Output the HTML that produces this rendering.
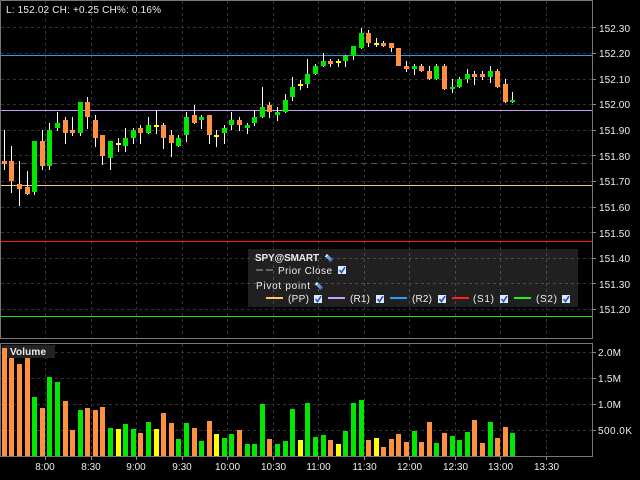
<!DOCTYPE html>
<html><head><meta charset="utf-8"><style>
html,body{margin:0;padding:0;background:#000;width:640px;height:480px;overflow:hidden}
svg{display:block;position:absolute;left:0;top:0}
text{font-family:"Liberation Sans",sans-serif;font-size:10px;fill:#eee}
</style></head><body>
<svg width="640" height="480" viewBox="0 0 640 480" shape-rendering="crispEdges">
<defs>
<g id="cb"><rect x="0" y="0" width="8" height="8" fill="#e4e9f6"/><path d="M1.5 4L3.5 6.5L7 1.2" fill="none" stroke="#1c5fd0" stroke-width="1.7" shape-rendering="geometricPrecision"/></g>
<g id="wr" shape-rendering="geometricPrecision"><path d="M1.5 1.5L6.5 6.5" stroke="#6f9fd8" stroke-width="3.2" fill="none"/><path d="M0.5 3L2.5 0.5" stroke="#f0f4fb" stroke-width="1.6" fill="none"/><path d="M4.5 7.5L7.5 5" stroke="#3f74b8" stroke-width="1.8" fill="none"/></g>
</defs>
<rect width="640" height="480" fill="#000"/>
<!-- grid -->
<path d="M1 27.5H592M1 53.5H592M1 79.5H592M1 104.5H592M1 130.5H592M1 155.5H592M1 181.5H592M1 207.5H592M1 232.5H592M1 258.5H592M1 283.5H592M1 309.5H592M1 352.5H592M1 378.5H592M1 404.5H592M1 430.5H592" stroke="#333" stroke-dasharray="3 3" fill="none"/>
<path d="M45.5 1V338M91.5 1V338M136.5 1V338M182.5 1V338M227.5 1V338M273.5 1V338M318.5 1V338M364.5 1V338M409.5 1V338M455.5 1V338M500.5 1V338M546.5 1V338M45.5 344V456M91.5 344V456M136.5 344V456M182.5 344V456M227.5 344V456M273.5 344V456M318.5 344V456M364.5 344V456M409.5 344V456M455.5 344V456M500.5 344V456M546.5 344V456" stroke="#333" stroke-dasharray="3 3" fill="none"/>
<!-- pivot lines -->
<path d="M1 55.5H592" stroke="#3399f0"/>
<path d="M1 110.5H592" stroke="#c9a0f5"/>
<path d="M1 163.5H592" stroke="#555" stroke-dasharray="6 4"/>
<path d="M1 185.5H592" stroke="#ffc668"/>
<path d="M1 241.5H592" stroke="#ff1a1a"/>
<path d="M1 316.5H592" stroke="#1fe61f"/>
<!-- wicks -->
<path stroke="#fff" fill="none" d="M4.5 130V170M11.5 146V193M19.5 161V206M27.5 171V195M34.5 141V195M42.5 130V170M49.5 123V170M57.5 112V131M65.5 117V144M72.5 117V136M80.5 102V136M87.5 97V129M95.5 115V147M102.5 135V165M110.5 141V170M118.5 138V152M125.5 128V152M133.5 128V144M140.5 125V144M148.5 117V134M156.5 110V134M163.5 123V149M171.5 130V157M178.5 135V147M186.5 112V142M194.5 105V124M201.5 115V129M209.5 115V144M216.5 130V147M224.5 125V144M231.5 112V130M239.5 117V131M247.5 123V134M254.5 110V126M262.5 87V118M269.5 102V118M277.5 107V121M285.5 94V113M292.5 77V101M300.5 80V90M307.5 59V88M315.5 64V75M323.5 53V67M330.5 59V67M338.5 59V67M345.5 55V67M353.5 46V60M361.5 28V49M368.5 30V47M376.5 38V47M383.5 41V47M391.5 43V52M406.5 61V72M414.5 64V75M421.5 64V72M429.5 66V80M436.5 64V80M444.5 64V90M452.5 79V93M459.5 77V88M467.5 69V83M474.5 71V85M482.5 71V80M490.5 66V83M497.5 69V88M505.5 79V103M512.5 92V103"/>
<!-- bodies -->
<path stroke="#ff9040" stroke-width="5" fill="none" d="M4.5 161V164M11.5 161V181M19.5 184V189M27.5 187V194M42.5 141V166M65.5 120V133M72.5 130V133M87.5 102V117M95.5 120V138M102.5 135V156M140.5 128V133M163.5 125V138M171.5 135V143M194.5 115V123M209.5 115V135M239.5 120V125M269.5 105V112M330.5 61V64M368.5 33V43M383.5 43V46M391.5 43V48M398.5 48V66M406.5 66V69M421.5 66V71M429.5 71V79M444.5 66V89M474.5 74V77M482.5 74V77M497.5 71V87M505.5 84V102"/>
<path stroke="#00e800" stroke-width="5" fill="none" d="M34.5 141V192M49.5 130V166M57.5 123V128M80.5 102V133M110.5 141V158M125.5 138V146M133.5 130V138M148.5 125V133M178.5 138V146M186.5 117V135M201.5 117V120M224.5 128V133M231.5 120V125M247.5 125V128M254.5 117V123M262.5 107V117M277.5 112V115M285.5 100V112M292.5 87V97M307.5 74V84M315.5 66V74M323.5 61V66M345.5 56V61M353.5 46V56M361.5 33V48M414.5 66V69M436.5 66V79M452.5 87V89M459.5 79V87M467.5 74V79M490.5 71V77M512.5 100V102"/>
<path stroke="#ffff00" stroke-width="5" fill="none" d="M118.5 143V145M156.5 125V127M216.5 135V137M300.5 84V86M338.5 61V63M376.5 43V45"/>
<!-- volume bars under label -->
<path stroke="#ff9040" stroke-width="5" fill="none" d="M11.5 358V456M19.5 364V456M27.5 358V456M42.5 408V456M65.5 401V456M72.5 430V456M87.5 408V456M95.5 410V456M102.5 407V456M140.5 433V456M163.5 413V456M171.5 423V456M194.5 428V456M209.5 421V456M239.5 430V456M269.5 439V456M330.5 440V456M368.5 440V456M383.5 447V456M391.5 439V456M398.5 434V456M406.5 442V456M421.5 442V456M429.5 422V456M444.5 433V456M474.5 420V456M482.5 443V456M497.5 438V456M505.5 427V456"/>
<path stroke="#00e800" stroke-width="5" fill="none" d="M34.5 397V456M49.5 377V456M57.5 382V456M80.5 410V456M110.5 428V456M125.5 424V456M133.5 429V456M148.5 422V456M178.5 439V456M186.5 423V456M201.5 441V456M224.5 438V456M231.5 434V456M247.5 444V456M254.5 444V456M262.5 404V456M277.5 444V456M285.5 441V456M292.5 409V456M307.5 403V456M315.5 437V456M323.5 435V456M345.5 431V456M353.5 403V456M361.5 400V456M414.5 431V456M436.5 443V456M452.5 436V456M459.5 440V456M467.5 432V456M490.5 422V456M512.5 433V456"/>
<path stroke="#ffff00" stroke-width="5" fill="none" d="M118.5 429V456M156.5 429V456M216.5 434V456M300.5 440V456M338.5 444V456M376.5 438V456"/>
<!-- volume label -->
<rect x="2" y="345" width="53" height="13" fill="#222"/>
<path stroke="#ff9040" stroke-width="5" fill="none" d="M4.5 348V456"/>
<text x="10" y="355" style="font-weight:bold" textLength="36">Volume</text>
<!-- frame -->
<path fill="none" stroke="#777" d="M0.5 0.5H592.5V338.5H0.5V0.5M0.5 343.5H592.5V456.5H0.5V343.5"/>
<!-- ticks -->
<path fill="none" stroke="#888" d="M592 27.5H596M592 53.5H596M592 79.5H596M592 104.5H596M592 130.5H596M592 155.5H596M592 181.5H596M592 207.5H596M592 232.5H596M592 258.5H596M592 283.5H596M592 309.5H596M592 352.5H596M592 378.5H596M592 404.5H596M592 430.5H596M45.5 456V460M91.5 456V460M136.5 456V460M182.5 456V460M227.5 456V460M273.5 456V460M318.5 456V460M364.5 456V460M409.5 456V460M455.5 456V460M500.5 456V460M546.5 456V460"/>
<!-- top info -->
<text x="6" y="13" textLength="155">L: 152.02 CH: +0.25 CH%: 0.16%</text>
<!-- price axis -->
<text x="599" y="32" textLength="31">152.30</text>
<text x="599" y="57" textLength="31">152.20</text>
<text x="599" y="83" textLength="31">152.10</text>
<text x="599" y="108" textLength="31">152.00</text>
<text x="599" y="134" textLength="31">151.90</text>
<text x="599" y="160" textLength="31">151.80</text>
<text x="599" y="185" textLength="31">151.70</text>
<text x="599" y="211" textLength="31">151.60</text>
<text x="599" y="237" textLength="31">151.50</text>
<text x="599" y="262" textLength="31">151.40</text>
<text x="599" y="288" textLength="31">151.30</text>
<text x="599" y="313" textLength="31">151.20</text>
<!-- volume axis -->
<text x="598" y="356" textLength="23">2.0M</text>
<text x="598" y="382" textLength="23">1.5M</text>
<text x="598" y="408" textLength="23">1.0M</text>
<text x="598" y="434" textLength="34">500.0K</text>
<!-- time axis -->
<text x="45" y="470" text-anchor="middle">8:00</text>
<text x="91" y="470" text-anchor="middle">8:30</text>
<text x="136" y="470" text-anchor="middle">9:00</text>
<text x="182" y="470" text-anchor="middle">9:30</text>
<text x="227.5" y="470" text-anchor="middle">10:00</text>
<text x="273.5" y="470" text-anchor="middle">10:30</text>
<text x="318.5" y="470" text-anchor="middle">11:00</text>
<text x="364.5" y="470" text-anchor="middle">11:30</text>
<text x="409.5" y="470" text-anchor="middle">12:00</text>
<text x="455.5" y="470" text-anchor="middle">12:30</text>
<text x="500.5" y="470" text-anchor="middle">13:00</text>
<text x="546.5" y="470" text-anchor="middle">13:30</text>
<!-- legend -->
<rect x="248" y="249" width="330" height="58" fill="#fff" fill-opacity="0.125"/>
<text x="255" y="261" style="font-weight:bold" textLength="64">SPY@SMART</text>
<use href="#wr" x="325" y="254"/>
<path d="M256 270H263M266 270H273" stroke="#666" stroke-width="2" fill="none"/>
<text x="278" y="274" textLength="54">Prior Close</text>
<use href="#cb" x="338" y="266"/>
<text x="256" y="289" textLength="54">Pivot point</text>
<use href="#wr" x="315" y="282"/>
<path d="M266 298H283" stroke="#ffc668" stroke-width="2" fill="none"/>
<text x="288" y="302" textLength="21">(PP)</text>
<use href="#cb" x="314" y="295"/>
<path d="M328 298H345" stroke="#c9a0f5" stroke-width="2" fill="none"/>
<text x="350" y="302" textLength="20">(R1)</text>
<use href="#cb" x="376" y="295"/>
<path d="M390 298H407" stroke="#2b9cf5" stroke-width="2" fill="none"/>
<text x="412" y="302" textLength="20">(R2)</text>
<use href="#cb" x="438" y="295"/>
<path d="M452 298H469" stroke="#ff2020" stroke-width="2" fill="none"/>
<text x="473" y="302" textLength="21">(S1)</text>
<use href="#cb" x="500" y="295"/>
<path d="M514 298H531" stroke="#22ee22" stroke-width="2" fill="none"/>
<text x="536" y="302" textLength="21">(S2)</text>
<use href="#cb" x="562" y="295"/>
</svg>
</body></html>
